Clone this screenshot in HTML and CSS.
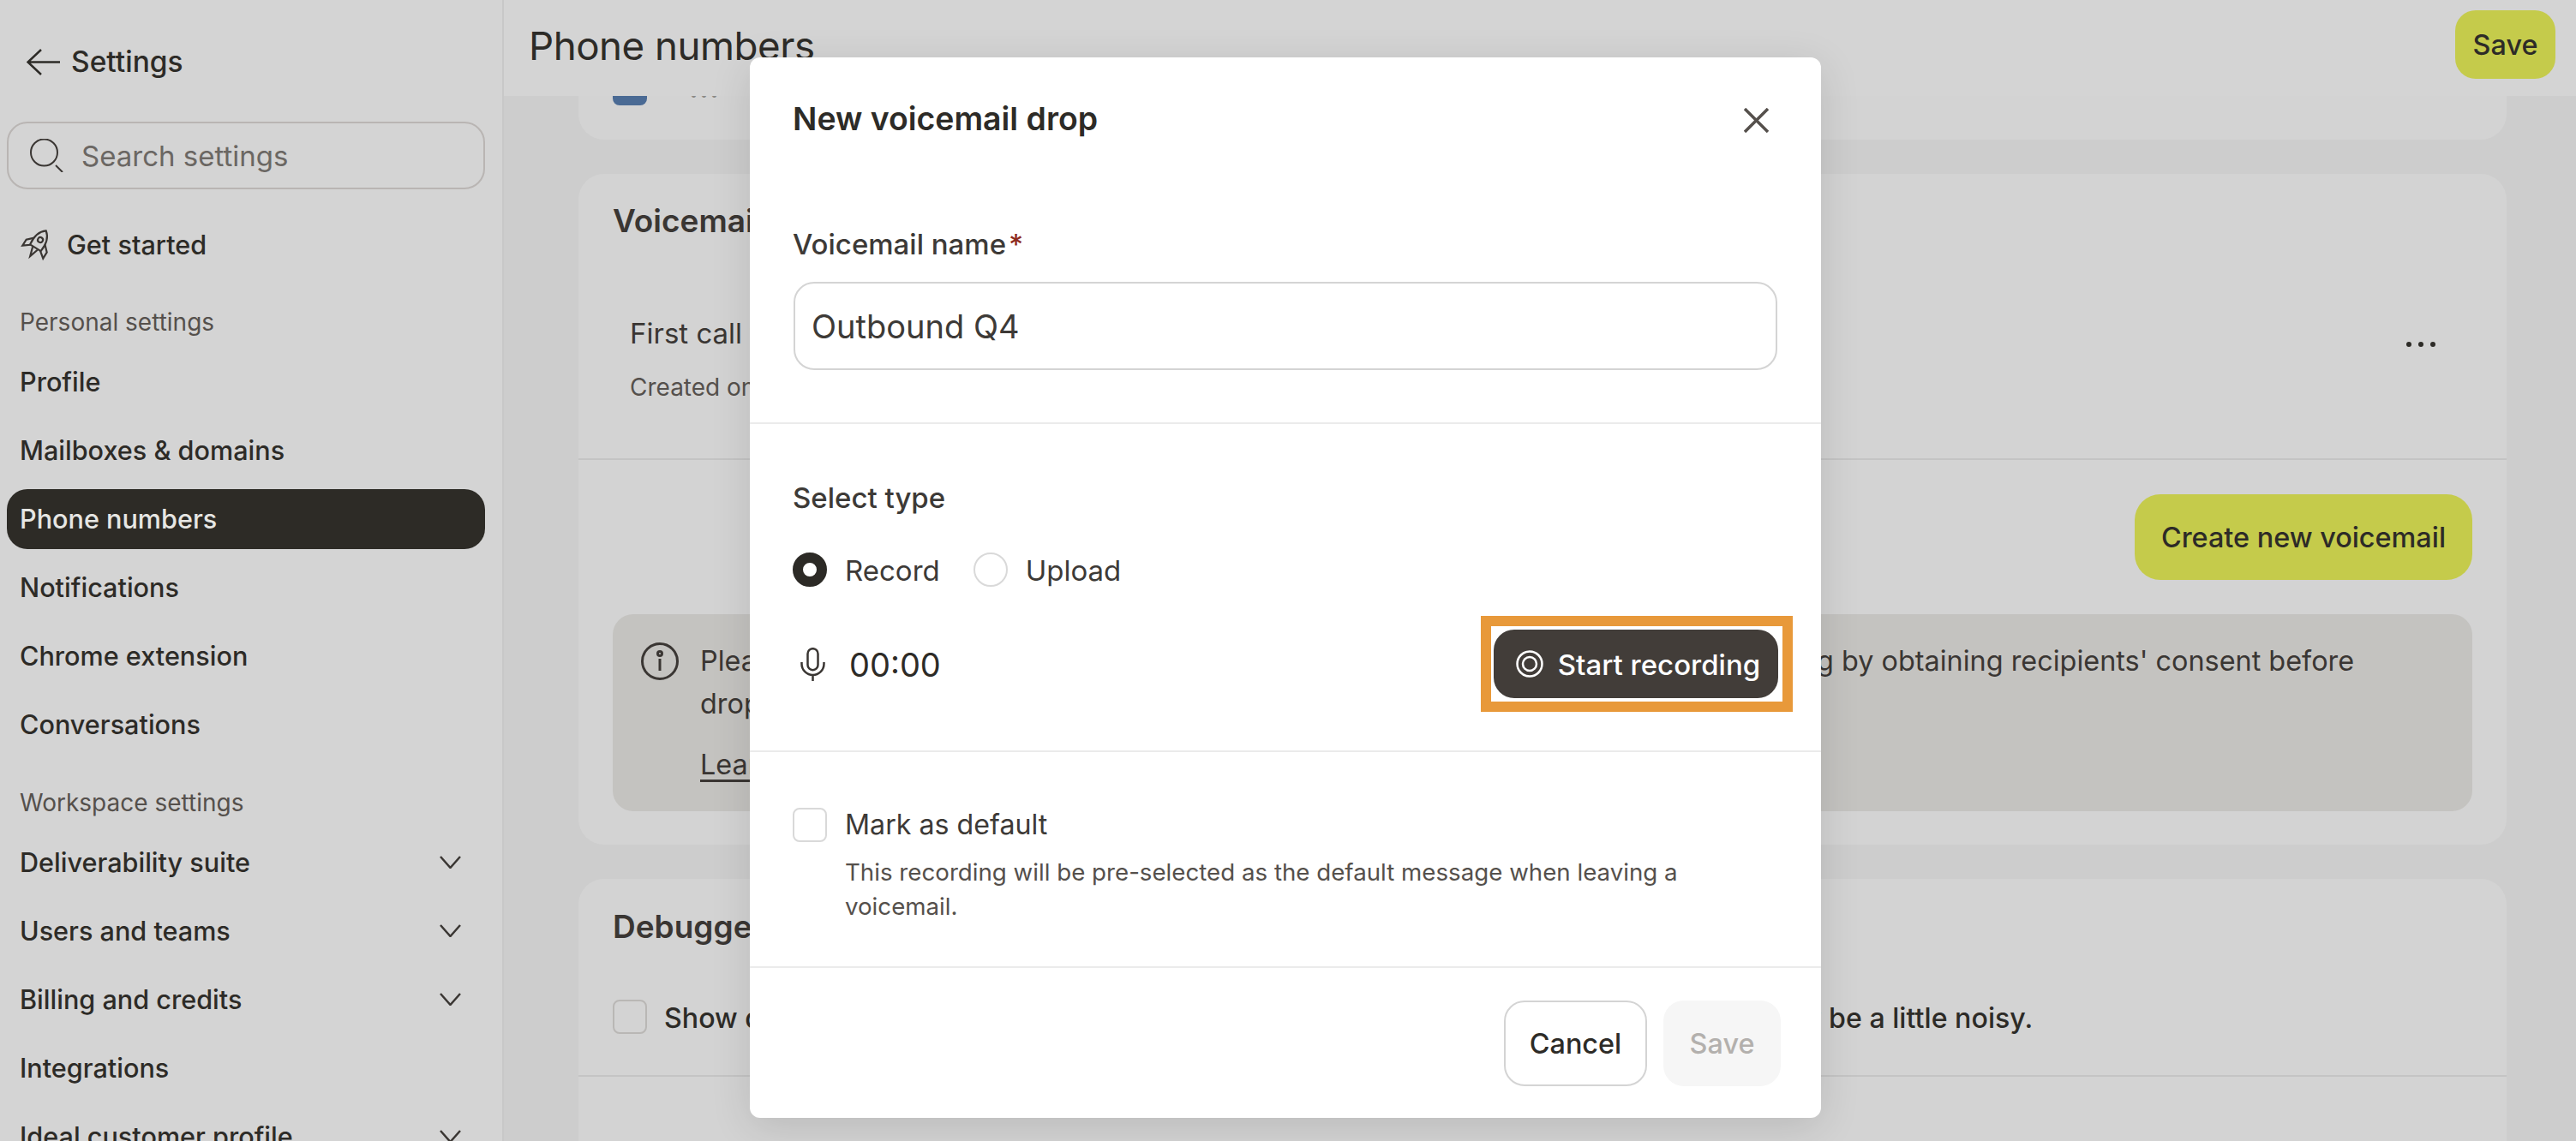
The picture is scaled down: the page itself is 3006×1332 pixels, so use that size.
FILE: index.html
```html
<!DOCTYPE html>
<html lang="en">
<head>
  <meta charset="UTF-8">
  <meta name="viewport" content="width=device-width, initial-scale=1.0">
  <title>Phone numbers - Settings</title>
  <link rel="stylesheet" href="styles.css">
</head>
<body>
  <aside class="sidebar">
    <div class="back-row">
      <svg class="back-icon" viewBox="0 0 39 31"><path d="M1.5 15.5H39M17 1L1.5 15.5L17 30"/></svg>
      <span>Settings</span>
    </div>
    <div class="search-box">
      <svg class="search-icon" viewBox="0 0 39 39"><circle cx="16.5" cy="16" r="15.5"/><path d="M30 31l8 8"/></svg>
      <span>Search settings</span>
    </div>
    <div class="nav-item get-started">
      <svg class="rocket-icon" viewBox="0 0 24 24">
        <g transform="rotate(32 12 12)">
          <path d="M12 1C16 4 17.200 9 16.400 15H7.600C6.800 9 8 4 12 1Z"/>
          <circle cx="12" cy="8.500" r="1.800"/>
          <path d="M7.600 9.500L3.500 13.500V18.500L8 15M16.400 9.500L20.500 13.500V18.500L16 15M10 15.500L12 22L14 15.500"/>
        </g>
      </svg>
      <span>Get started</span>
    </div>
    <div class="nav-label personal">Personal settings</div>
    <nav class="nav-list">
      <a class="nav-item">Profile</a>
      <a class="nav-item">Mailboxes &amp; domains</a>
      <a class="nav-item active">Phone numbers</a>
      <a class="nav-item">Notifications</a>
      <a class="nav-item">Chrome extension</a>
      <a class="nav-item">Conversations</a>
    </nav>
    <div class="nav-label workspace">Workspace settings</div>
    <nav class="nav-list">
      <a class="nav-item">Deliverability suite <svg class="chevron" viewBox="0 0 25 15"><path d="M1 1L12.500 14L24 1"/></svg></a>
      <a class="nav-item">Users and teams <svg class="chevron" viewBox="0 0 25 15"><path d="M1 1L12.500 14L24 1"/></svg></a>
      <a class="nav-item">Billing and credits <svg class="chevron" viewBox="0 0 25 15"><path d="M1 1L12.500 14L24 1"/></svg></a>
      <a class="nav-item">Integrations</a>
      <a class="nav-item">Ideal customer profile <svg class="chevron" viewBox="0 0 25 15"><path d="M1 1L12.500 14L24 1"/></svg></a>
    </nav>
  </aside>

  <main class="main">
    <header class="page-header">
      <h1>Phone numbers</h1>
      <button class="btn btn-lime btn-top">Save</button>
    </header>
    <div class="content">
      <section class="card card-first">
        <div class="checkbox checked"></div>
        <span class="peek-dots">•••</span>
      </section>

      <section class="card card-voicemail">
        <h2 class="card-title">Voicemail drop</h2>
        <div class="voicemail-row">
          <div>
            <div class="voicemail-name">First call follow up</div>
            <div class="voicemail-date">Created on October 2</div>
          </div>
          <div class="more-dots"><i></i><i></i><i></i></div>
        </div>
        <div class="card-actions">
          <button class="btn btn-lime btn-create">Create new voicemail</button>
        </div>
        <div class="info-box">
          <svg class="info-icon" viewBox="0 0 44 44"><circle cx="22" cy="22" r="20.500"/><circle cx="22" cy="13" r="2.500"/><path d="M22 19V33"/></svg>
          <div class="info-text">
            <p>Please ensure you comply with applicable laws and regulations on voicemail recording by obtaining recipients' consent before<br>dropping a voicemail.</p>
            <a class="info-link">Learn more</a>
          </div>
        </div>
      </section>

      <section class="card card-debugger">
        <h2 class="card-title">Debugger</h2>
        <div class="debugger-row">
          <div class="checkbox"></div>
          <span>Show debugger in the voicemail drop flow to help diagnose issues. Heads up that it may be a little noisy.</span>
        </div>
      </section>
    </div>
  </main>

  <!-- New voicemail modal -->
  <div class="modal">
    <div class="modal-section section-name">
      <div class="modal-title-row">
        <h3>New voicemail drop</h3>
        <svg class="close-icon" viewBox="0 0 29 29"><path d="M1 1L28 28M28 1L1 28"/></svg>
      </div>
      <label class="field-label">Voicemail name<span class="required">*</span></label>
      <div class="text-input">Outbound Q4</div>
    </div>

    <div class="modal-section section-type">
      <div class="field-label">Select type</div>
      <div class="radio-row">
        <span class="radio selected"></span><span>Record</span>
        <span class="radio"></span><span>Upload</span>
      </div>
      <div class="record-row">
        <svg class="mic-icon" viewBox="0 0 29 39"><rect x="8.500" y="1.200" width="12" height="25" rx="6"/><path d="M1.500 17V19A13 13 0 0 0 27.500 19V17M14.500 32V39"/></svg>
        <span class="timer">00:00</span>
        <button class="btn btn-record">
          <svg class="record-icon" viewBox="0 0 32 32"><circle cx="16" cy="16" r="14.500"/><circle cx="16" cy="16" r="8"/></svg>
          <span class="record-label">Start recording</span>
          <span class="highlight"></span>
        </button>
      </div>
    </div>

    <div class="modal-section section-default">
      <div class="checkbox light"></div>
      <div>
        <div class="default-label">Mark as default</div>
        <p class="default-help">This recording will be pre-selected as the default message when leaving a voicemail.</p>
      </div>
    </div>

    <div class="modal-footer">
      <button class="btn btn-cancel">Cancel</button>
      <button class="btn btn-disabled">Save</button>
    </div>
  </div>
</body>
</html>
```

FILE: styles.css
```css
* {
  box-sizing: border-box;
}

body {
  margin: 0;
  display: flex;
  height: 100vh;
  overflow: hidden;
  background-color: #d4d4d4;
  color: #2d2b27;
  font-family: Inter, "Liberation Sans", sans-serif;
}

svg {
  fill: none;
  stroke: currentColor;
  flex-shrink: 0;
}

h1, h2, h3, p {
  margin: 0;
}

/* Sidebar */
.sidebar {
  width: 588px;
  flex-shrink: 0;
  height: 100%;
  overflow: hidden;
  padding: 38px 20px 0 8px;
  border-right: 2px solid #c8c8c8;
}

.back-row {
  display: flex;
  align-items: center;
  gap: 13px;
  height: 70px;
  padding: 0 0 2px 23px;
  font-size: 33.500px;
  font-weight: 500;
}

.back-icon {
  width: 39px;
  height: 31px;
  stroke-width: 2.5;
}

.search-box {
  display: flex;
  align-items: center;
  gap: 21px;
  height: 79px;
  margin-top: 34px;
  padding-left: 25px;
  border: 2px solid #b9b5b3;
  border-radius: 24px;
  color: #6b6763;
  font-size: 33px;
}

.search-icon {
  width: 39px;
  height: 39px;
  color: #3a3633;
  stroke-width: 2;
}

.nav-item {
  display: flex;
  align-items: center;
  justify-content: space-between;
  height: 70px;
  padding: 0 28px 2px 15px;
  border-radius: 24px;
  font-size: 30.600px;
  font-weight: 500;
}

.nav-item.active {
  background-color: #2d2b26;
  color: #e6e6e3;
}

.get-started {
  justify-content: flex-start;
  gap: 14px;
  margin-top: 30px;
  padding-left: 16px;
}

.rocket-icon {
  width: 40px;
  height: 40px;
  stroke-width: 1.300;
  color: #3a3633;
}

.nav-label {
  height: 40px;
  line-height: 40px;
  padding-left: 15px;
  font-size: 28px;
  color: #55504c;
}

.nav-label.personal {
  margin: 35px 0 15px;
}

.nav-label.workspace {
  margin: 36px 0 15px;
}

.nav-list {
  display: flex;
  flex-direction: column;
  gap: 10px;
}

.chevron {
  width: 25px;
  height: 15px;
  stroke-width: 2.500;
  color: #3a3633;
}

/* Main column */
.main {
  flex: 1;
  min-width: 0;
  background-color: #cdcdcd;
}

.page-header {
  position: relative;
  z-index: 1;
  display: flex;
  justify-content: space-between;
  align-items: flex-start;
  height: 112px;
  padding: 12px 24px 0 29px;
  background-color: #d4d4d4;
}

.page-header h1 {
  padding-top: 11px;
  font-size: 45.700px;
  font-weight: 400;
  line-height: 62px;
  letter-spacing: -0.5px;
}

.content {
  display: flex;
  flex-direction: column;
  gap: 40px;
  height: 1220px;
  overflow: hidden;
  padding: 0 81px 0 87px;
}

.card {
  flex-shrink: 0;
  background-color: #d3d3d3;
  border-radius: 30px;
}

.card-first {
  display: flex;
  align-items: flex-start;
  gap: 50px;
  margin-top: -29px;
  padding: 0 40px 40px;
}

.peek-dots {
  margin-top: 19px;
  color: #8b8986;
  font-size: 16px;
  letter-spacing: 3px;
  line-height: 16px;
}

.card-title {
  height: 40px;
  font-size: 37px;
  font-weight: 600;
  line-height: 40px;
  color: #3a3633;
}

.card-voicemail {
  height: 783px;
  padding: 35px 40px 0;
}

.voicemail-row {
  display: flex;
  justify-content: space-between;
  align-items: center;
  margin: 0 -40px;
  padding: 91px 83px 63px 60px;
  border-bottom: 2px solid #c4c4c4;
}

.voicemail-name {
  height: 40px;
  line-height: 40px;
  font-size: 33px;
  color: #3a3633;
}

.voicemail-date {
  height: 40px;
  margin-top: 23px;
  line-height: 40px;
  font-size: 28px;
  color: #55504c;
}

.more-dots {
  display: flex;
  gap: 8px;
  margin-top: -37px;
}

.more-dots i {
  width: 6px;
  height: 6px;
  border-radius: 50%;
  background-color: #2d2b27;
}

.card-actions {
  display: flex;
  justify-content: flex-end;
  margin-top: 40px;
}

.info-box {
  display: flex;
  gap: 25px;
  height: 230px;
  margin-top: 40px;
  padding: 30px 33px;
  background-color: #c4c3c0;
  border-radius: 24px;
  color: #3a3633;
  font-size: 32.400px;
  line-height: 50px;
}

.info-icon {
  width: 44px;
  height: 44px;
  margin-top: 3px;
  stroke-width: 3;
}

.info-link {
  display: block;
  margin-top: 21px;
  text-decoration: underline;
  text-underline-offset: 6px;
}

.card-debugger {
  height: 400px;
  padding: 36px 40px 0;
}

.debugger-row {
  display: flex;
  align-items: center;
  gap: 20px;
  margin: 64px -40px 0;
  padding: 0 40px 47px;
  border-bottom: 2px solid #c4c4c4;
  font-size: 32.200px;
  font-weight: 500;
}

.debugger-row span {
  padding-top: 3px;
}

.checkbox {
  flex-shrink: 0;
  width: 40px;
  height: 40px;
  border: 2px solid #b9b7b5;
  border-radius: 8px;
}

.checkbox.checked {
  background-color: #4a6a94;
  border: 0;
}

.checkbox.light {
  border-color: #d9d9d9;
}

/* Buttons */
.btn {
  display: inline-flex;
  align-items: center;
  justify-content: center;
  border: 0;
  padding: 0;
  border-radius: 24px;
  font-family: inherit;
  font-size: 32.400px;
  font-weight: 500;
  color: #2d2b27;
}

.btn-lime {
  background-color: #c5cb4b;
}

.btn-top {
  width: 117px;
  height: 80px;
}

.btn-create {
  width: 394px;
  height: 100px;
  border-radius: 30px;
}

/* Modal */
.modal {
  position: absolute;
  top: 67px;
  left: 875px;
  z-index: 5;
  width: 1250px;
  height: 1238px;
  background-color: #fff;
  border-radius: 12px;
  box-shadow: 0 10px 48px rgba(0, 0, 0, 0.12);
  color: #3d3a37;
}

.modal-section {
  padding: 0 51px;
  border-bottom: 2px solid #ebebeb;
}

.section-name {
  height: 428px;
  padding-top: 46px;
}

.modal-title-row {
  display: flex;
  justify-content: space-between;
  align-items: center;
  height: 50px;
  padding-right: 10px;
}

.modal-title-row h3 {
  margin-left: -1px;
  font-size: 37.400px;
  font-weight: 600;
  color: #2d2b27;
}

.close-icon {
  width: 29px;
  height: 29px;
  margin-top: 4px;
  color: #55504c;
  stroke-width: 3.500;
}

.field-label {
  height: 40px;
  margin-left: -1px;
  line-height: 40px;
  font-size: 33px;
  font-weight: 500;
}

.section-name .field-label {
  display: block;
  margin-top: 102px;
}

.required {
  margin-left: 3px;
  color: #8e2a1d;
}

.text-input {
  display: flex;
  align-items: center;
  height: 103px;
  margin-top: 24px;
  padding-left: 19px;
  border: 2px solid #d4d4d4;
  border-radius: 24px;
  font-size: 38px;
}

.section-type {
  height: 383px;
  padding-top: 66px;
}

.radio-row {
  display: flex;
  align-items: center;
  gap: 20px;
  height: 40px;
  margin: 44px 0 0 -1px;
  font-size: 33px;
}

.radio-row span:not(.radio) {
  padding-top: 2px;
}

.radio {
  width: 40px;
  height: 40px;
  border: 2px solid #d9d9d9;
  border-radius: 50%;
}

.radio + span {
  margin-left: 1px;
}

.radio + span + .radio {
  margin-left: 19px;
}

.radio.selected {
  border: 12px solid #2c2a26;
}

.record-row {
  display: flex;
  align-items: center;
  margin-top: 50px;
}

.mic-icon {
  width: 29px;
  height: 39px;
  margin-left: 8px;
  color: #3a3633;
  stroke-width: 2.500;
}

.timer {
  flex: 1;
  margin-left: 28px;
  padding-top: 2px;
  color: #2d2b27;
  font-size: 38px;
}

.btn-record {
  position: relative;
  gap: 17px;
  width: 332px;
  height: 80px;
  margin-right: -1px;
  padding-left: 5px;
  background-color: #423d39;
  color: #fff;
  font-size: 33px;
}

.record-label {
  padding-top: 2px;
}

.record-icon {
  width: 32px;
  height: 32px;
  stroke-width: 2.500;
}

.highlight {
  position: absolute;
  top: -16px;
  bottom: -16px;
  left: -15px;
  right: -17px;
  border: 12px solid #e8993a;
}

.section-default {
  display: flex;
  gap: 21px;
  height: 252px;
  padding-top: 65px;
}

.section-default .checkbox {
  margin-left: -1px;
}

.default-label {
  height: 40px;
  line-height: 40px;
  font-size: 32.200px;
}

.default-help {
  margin-top: 15px;
  font-size: 27.700px;
  line-height: 40px;
  color: #55504c;
}

.modal-footer {
  display: flex;
  justify-content: flex-end;
  gap: 19px;
  padding: 38px 47px 0 0;
}

.btn-cancel {
  width: 167px;
  height: 100px;
  background-color: #fff;
  border: 2.500px solid #d4d4d4;
}

.btn-disabled {
  width: 137px;
  height: 100px;
  background-color: #f6f6f6;
  color: #b3b0ad;
}
```
